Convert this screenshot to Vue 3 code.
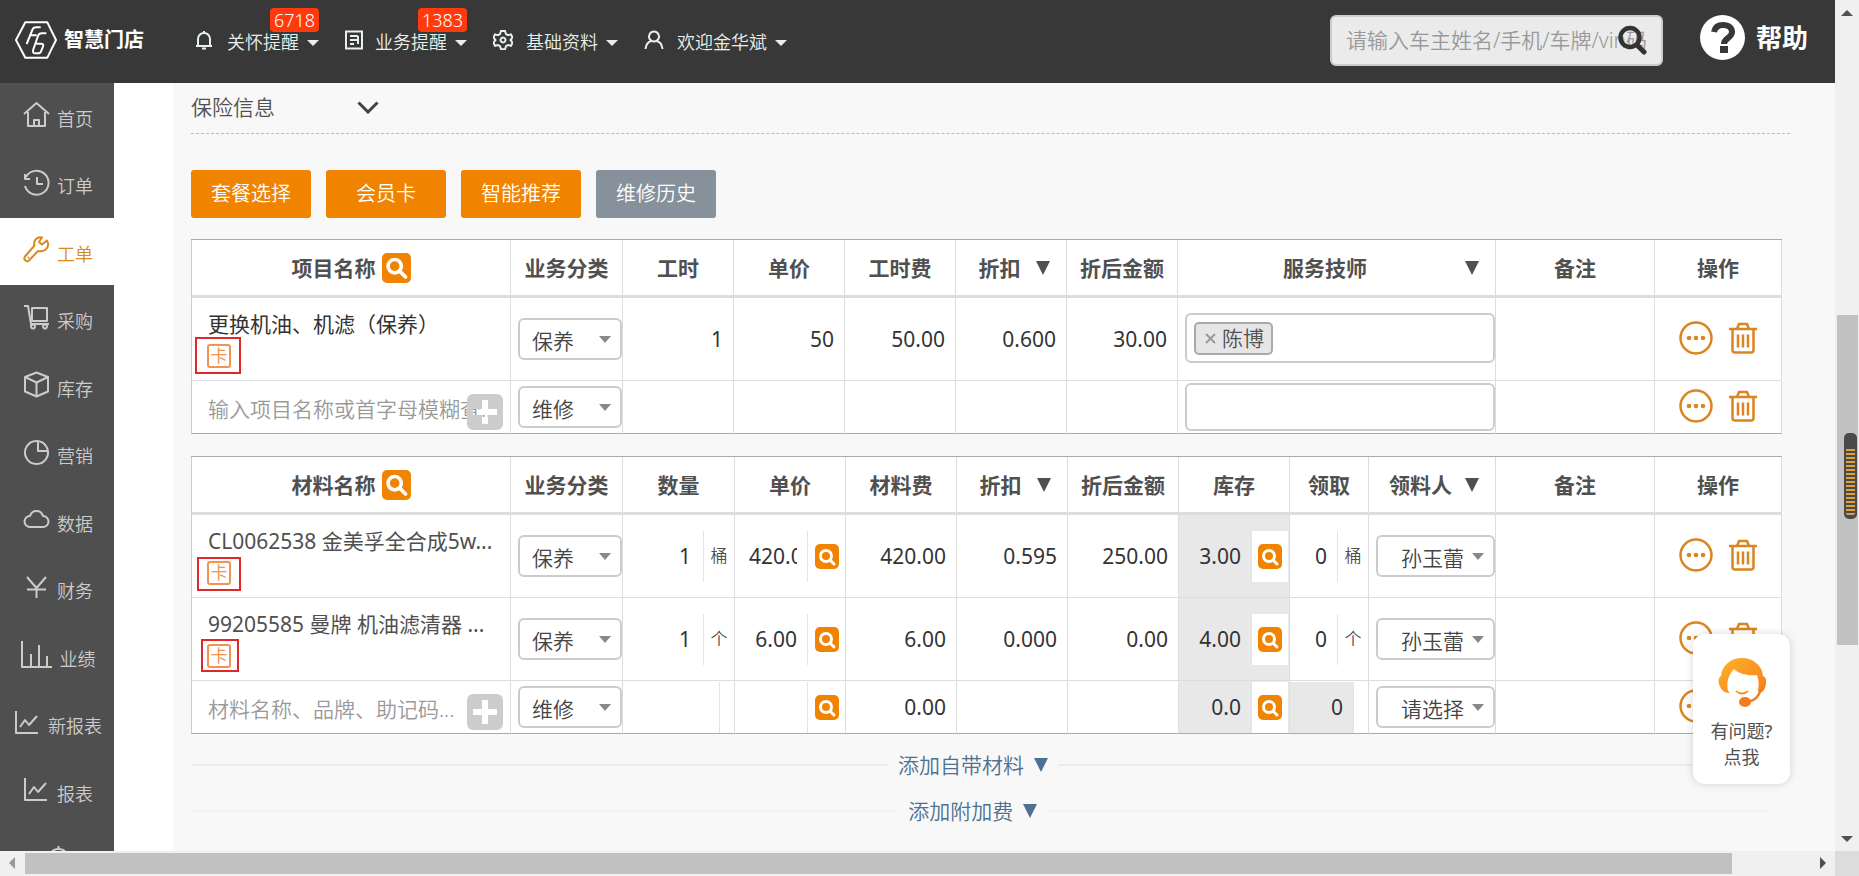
<script setup>
import { ref } from 'vue'

const navItems = [
  { label: '关怀提醒', badge: '6718', icon: ['M4 16V9a6 6 0 0 1 12 0v7', 'M2 16h16', 'M10 1v2', 'M8 18.500h4'] },
  {
    label: '业务提醒',
    badge: '1383',
    narrow: true,
    icon: ['M2 1.500h16v17H2z', 'M6 6h8', 'M6 10h8', 'M6 14h4', 'M14 6v8']
  },
  {
    label: '基础资料',
    icon: [
      'M8 1h4l1 3 2 1.200 3-.8 1.500 3.200-2 2.400 2 2.600-1.500 3.200-3-.8-2 1.200-1 3H8l-1-3-2-1.200-3 .8L.5 12.600 2.500 10 .5 7.600 2 4.400l3 .8L7 4z',
      'M10 7.500a2.500 2.500 0 1 0 .01 0z'
    ]
  },
  { label: '欢迎金华斌', icon: ['M10 1.500a5 5 0 1 0 .01 0z', 'M1.500 19c.5-4.500 3-7.500 6-8', 'M18.500 19c-.5-4.500-3-7.500-6-8'] }
]

const sideItems = [
  { label: '首页', icon: ['M1 13 13.500 2 26 13', 'M5 11v14h17V11', 'M11 25v-6h5v6'] },
  { label: '订单', icon: ['M3 8a12 12 0 1 1-1 9', 'M2 5v5h5', 'M14 8v7h6'] },
  {
    label: '工单',
    active: true,
    icon: ['M24 4.500l-5 4-3-2.500 3-4.500c-5-1-9 3-7.500 8L2 20.500c-2 3 1.500 6 4 4L15 15c6 1.500 11-3 10-8z', 'M5 22l1-1']
  },
  {
    label: '采购',
    icon: ['M1 2h4l3 18', 'M9 4h15v13H9z', 'M7 20h19', 'M10 20.500a2 2 0 1 0 .01 0z', 'M22 20.500a2 2 0 1 0 .01 0z']
  },
  { label: '库存', icon: ['M13.500 1.500 25 6v14.500l-11.500 5L2 20.500V6z', 'M2 6l11.500 5.500L25 6', 'M13.500 11.500v14'] },
  { label: '营销', icon: ['M13.500 2a11.500 11.500 0 1 0 .01 0z', 'M15 2v10h10'] },
  { label: '数据', icon: ['M7 21a5.500 5.500 0 0 1 0-11c1-3.500 3.500-5 6.500-5s5.500 1.500 6.500 5a5.500 5.500 0 0 1 0 11z'] },
  { label: '财务', icon: ['M4 3l9.500 11L23 3', 'M13.500 14v10', 'M4 15.500h19'] },
  { label: '业绩', wide: true, icon: ['M1 0v26h30', 'M10 26V13', 'M18 26V4', 'M26 26V15'] },
  { label: '新报表', icon: ['M2 2v22h22', 'M6 18l5-7 4 5 8-9'] },
  { label: '报表', icon: ['M2 2v22h22', 'M6 18l5-7 4 5 8-9'] },
  { label: '', icon: ['M13.500 2v3', 'M3 18C4 8 8 5 13.500 5S23 8 24 18z'] }
]

const serviceCols = [
  { label: '项目名称', w: 320, search: true },
  { label: '业务分类', w: 112 },
  { label: '工时', w: 111 },
  { label: '单价', w: 111 },
  { label: '工时费', w: 111 },
  { label: '折扣', w: 111, sort: true },
  { label: '折后金额', w: 111 },
  { label: '服务技师', w: 318, sort: true },
  { label: '备注', w: 159 },
  { label: '操作', w: 127 }
]
const services = ref([
  { name: '更换机油、机滤（保养）', mark: 'mark-a', type: '保养', nums: ['1', '50', '50.00', '0.600', '30.00'], staff: '陈博' },
  { hint: '输入项目名称或首字母模糊查...', type: '维修', nums: ['', '', '', '', ''] }
])

const materialCols = [
  { label: '材料名称', w: 320, search: true },
  { label: '业务分类', w: 112 },
  { label: '数量', w: 112 },
  { label: '单价', w: 111 },
  { label: '材料费', w: 111 },
  { label: '折扣', w: 111, sort: true },
  { label: '折后金额', w: 111 },
  { label: '库存', w: 111 },
  { label: '领取', w: 79 },
  { label: '领料人', w: 127, sort: true },
  { label: '备注', w: 159 },
  { label: '操作', w: 127 }
]
const materials = ref([
  {
    name: 'CL0062538 金美孚全合成5w...', mark: 'mark-b', type: '保养', qty: '1', unit: '桶', price: '420.00',
    fee: '420.00', discount: '0.595', total: '250.00', stock: '3.00', taken: '0', picker: '孙玉蕾'
  },
  {
    name: '99205585 曼牌 机油滤清器 ...', mark: 'mark-c', type: '保养', qty: '1', unit: '个', price: '6.00',
    fee: '6.00', discount: '0.000', total: '0.00', stock: '4.00', taken: '0', picker: '孙玉蕾'
  },
  {
    hint: '材料名称、品牌、助记码...', type: '维修', qty: '', unit: '', price: '',
    fee: '0.00', discount: '', total: '', stock: '0.0', taken: '0', picker: '请选择'
  }
])
</script>

<template>
  <div class="window">
    <div class="page">
      <header class="topbar">
        <a class="logo" href="#" aria-label="智慧门店">
          <svg width="44" height="40" viewBox="42 60 132 120" fill="none" stroke="#fff" stroke-width="6" stroke-linejoin="round">
            <path d="M48 120 76 67h66l26 53-26 53H76z" />
            <path d="M122 82h-14q-8 0-11 8L80 132M90 106h20" />
            <path d="M139 100h-14q-8 0-11 8l-14 40q-4 12 6 12h8q8 0 10-8l5-12q3-9-6-9h-14" />
          </svg>
          <span>智慧门店</span>
        </a>
        <nav class="topnav">
          <button v-for="item in navItems" :key="item.label" class="navitem" type="button">
            <svg :class="['nav-icon', { narrow: item.narrow }]" :viewBox="item.narrow ? '1 0 18 20' : '0 0 20 20'">
              <path v-for="d in item.icon" :key="d" :d="d" />
            </svg>
            <span class="nav-label">{{ item.label }}</span>
            <svg class="caret" viewBox="0 0 12 6"><path d="M0 0h12L6 6z" /></svg>
            <span v-if="item.badge" class="badge">{{ item.badge }}</span>
          </button>
        </nav>
        <div class="search">
          <input type="text" aria-label="搜索" placeholder="请输入车主姓名/手机/车牌/vin码" />
          <button type="button" aria-label="搜索">
            <svg width="30" height="30" viewBox="0 0 30 30" fill="none" stroke="#333" stroke-linecap="round">
              <circle cx="13" cy="12.500" r="9.500" stroke-width="4.500" /><path d="M20 20l7 7" stroke-width="5" />
            </svg>
          </button>
        </div>
        <a class="help" href="#">
          <svg width="45" height="45" viewBox="0 0 45 45">
            <circle cx="22.500" cy="22.500" r="22.500" fill="#fff" />
            <path d="M14 17c1-5 4-7 9-7 6 0 9 3 9 7 0 6-8 6-8 12" fill="none" stroke="#383838" stroke-width="6" />
            <path d="M20 31h8v7h-8z" fill="#383838" />
          </svg>
          <span>帮助</span>
        </a>
      </header>

      <div class="body">
        <nav class="sidebar">
          <a v-for="(item, i) in sideItems" :key="i" href="#" class="side-item" :class="{ active: item.active }">
            <svg :class="['side-icon', { wide: item.wide }]" :viewBox="item.wide ? '0 0 32 27' : '0 0 27 27'">
              <path v-for="d in item.icon" :key="d" :d="d" />
            </svg>
            <span v-if="item.label">{{ item.label }}</span>
          </a>
        </nav>

        <main class="content">
          <button class="fold" type="button">
            <span>保险信息</span>
            <svg width="22" height="13" viewBox="0 0 22 13"><path d="M1.500 1.500 11 11l9.500-9.500" fill="none" stroke="#444" stroke-width="3" /></svg>
          </button>

          <div class="actions">
            <button type="button" class="btn">套餐选择</button>
            <button type="button" class="btn">会员卡</button>
            <button type="button" class="btn">智能推荐</button>
            <button type="button" class="btn gray">维修历史</button>
          </div>

          <table class="grid">
            <colgroup><col v-for="c in serviceCols" :key="c.label" :width="c.w" /></colgroup>
            <thead>
              <tr>
                <th v-for="c in serviceCols" :key="c.label" scope="col">
                  <div class="head" :class="{ sortable: c.sort }">
                    <span>{{ c.label }}</span>
                    <button v-if="c.search" class="find big" type="button" aria-label="查找">
                      <svg viewBox="0 0 24 24"><circle cx="10.500" cy="10.500" r="5.500" /><path d="M15 15l4.500 4.500" /></svg>
                    </button>
                    <svg v-if="c.sort" class="tri" viewBox="0 0 14 14"><path d="M0 0h14L7 14z" /></svg>
                  </div>
                </th>
              </tr>
            </thead>
            <tbody>
              <tr v-for="(r, i) in services" :key="i" :class="{ short: r.hint }">
                <td>
                  <div v-if="r.name" class="name">
                    <span class="name-text dark">{{ r.name }}</span>
                    <span class="card">卡<i class="mark" :class="r.mark"></i></span>
                  </div>
                  <div v-else class="entry">
                    <input type="text" aria-label="项目名称" :placeholder="r.hint" />
                    <button class="plus" type="button" aria-label="新增项目">
                      <svg viewBox="0 0 36 36"><path fill-rule="evenodd" d="M6 0h24a6 6 0 0 1 6 6v24a6 6 0 0 1-6 6H6a6 6 0 0 1-6-6V6a6 6 0 0 1 6-6zM15 6v9H6v6h9v9h6v-9h9v-6h-9V6z" /></svg>
                    </button>
                  </div>
                </td>
                <td>
                  <div class="pick">
                    <select v-model="r.type" aria-label="业务分类"><option>保养</option><option>维修</option></select>
                    <svg viewBox="0 0 12 7"><path d="M0 0h12L6 7z" /></svg>
                  </div>
                </td>
                <td v-for="(n, j) in r.nums" :key="j"><input v-model="r.nums[j]" class="num" type="text" :aria-label="serviceCols[j + 2].label" /></td>
                <td>
                  <div class="tags">
                    <span v-if="r.staff" class="tag">
                      <button type="button" aria-label="移除">
                        <svg width="11" height="11" viewBox="0 0 11 11"><path d="M1 1l9 9M10 1l-9 9" stroke="#999" stroke-width="2" /></svg>
                      </button>{{ r.staff }}
                    </span>
                    <input type="text" aria-label="服务技师" />
                  </div>
                </td>
                <td></td>
                <td>
                  <div class="ops">
                    <button type="button" aria-label="更多">
                      <svg width="34" height="34" viewBox="0 0 34 34">
                        <circle cx="17" cy="17" r="15.500" fill="none" stroke="#dc8420" stroke-width="2.500" />
                        <g fill="#dc8420"><circle cx="10" cy="17" r="2.300" /><circle cx="17" cy="17" r="2.300" /><circle cx="24" cy="17" r="2.300" /></g>
                      </svg>
                    </button>
                    <button type="button" aria-label="删除">
                      <svg width="28" height="32" viewBox="0 0 28 32" fill="none" stroke="#dc8420" stroke-width="2.500">
                        <path d="M0 7h28M8 7l2-5h8l2 5M3.500 7v21q0 2.500 2.500 2.500h16q2.500 0 2.500-2.500V7M9 12.500v13M14 12.500v13M19 12.500v13" />
                      </svg>
                    </button>
                  </div>
                </td>
              </tr>
            </tbody>
          </table>

          <table class="grid">
            <colgroup><col v-for="c in materialCols" :key="c.label" :width="c.w" /></colgroup>
            <thead>
              <tr>
                <th v-for="c in materialCols" :key="c.label" scope="col">
                  <div class="head" :class="{ sortable: c.sort }">
                    <span>{{ c.label }}</span>
                    <button v-if="c.search" class="find big" type="button" aria-label="查找">
                      <svg viewBox="0 0 24 24"><circle cx="10.500" cy="10.500" r="5.500" /><path d="M15 15l4.500 4.500" /></svg>
                    </button>
                    <svg v-if="c.sort" class="tri" viewBox="0 0 14 14"><path d="M0 0h14L7 14z" /></svg>
                  </div>
                </th>
              </tr>
            </thead>
            <tbody>
              <tr v-for="(r, i) in materials" :key="i" :class="{ short: r.hint }">
                <td>
                  <div v-if="r.name" class="name">
                    <span class="name-text">{{ r.name }}</span>
                    <span class="card">卡<i class="mark" :class="r.mark"></i></span>
                  </div>
                  <div v-else class="entry">
                    <input type="text" aria-label="材料名称" :placeholder="r.hint" />
                    <button class="plus" type="button" aria-label="新增材料">
                      <svg viewBox="0 0 36 36"><path fill-rule="evenodd" d="M6 0h24a6 6 0 0 1 6 6v24a6 6 0 0 1-6 6H6a6 6 0 0 1-6-6V6a6 6 0 0 1 6-6zM15 6v9H6v6h9v9h6v-9h9v-6h-9V6z" /></svg>
                    </button>
                  </div>
                </td>
                <td>
                  <div class="pick">
                    <select v-model="r.type" aria-label="业务分类"><option>保养</option><option>维修</option></select>
                    <svg viewBox="0 0 12 7"><path d="M0 0h12L6 7z" /></svg>
                  </div>
                </td>
                <td>
                  <div class="split qty">
                    <input v-model="r.qty" class="num" type="text" aria-label="数量" />
                    <span class="unit">{{ r.unit }}</span>
                  </div>
                </td>
                <td>
                  <div class="split price">
                    <input v-model="r.price" class="num" type="text" aria-label="单价" />
                    <span class="side"><button class="find" type="button" aria-label="查价"><svg viewBox="0 0 24 24"><circle cx="11" cy="11.500" r="5.500" /><path d="M15.500 16l3.500 3.500" /></svg></button></span>
                  </div>
                </td>
                <td><input v-model="r.fee" class="num" type="text" aria-label="材料费" /></td>
                <td><input v-model="r.discount" class="num" type="text" aria-label="折扣" /></td>
                <td><input v-model="r.total" class="num" type="text" aria-label="折后金额" /></td>
                <td class="locked">
                  <div class="split stock">
                    <input v-model="r.stock" class="num" type="text" aria-label="库存" readonly />
                    <span class="side"><button class="find" type="button" aria-label="查库存"><svg viewBox="0 0 24 24"><circle cx="11" cy="11.500" r="5.500" /><path d="M15.500 16l3.500 3.500" /></svg></button></span>
                  </div>
                </td>
                <td>
                  <div class="split taken">
                    <input v-model="r.taken" class="num" type="text" aria-label="领取" />
                    <span class="unit">{{ r.unit }}</span>
                  </div>
                </td>
                <td>
                  <div class="pick person">
                    <select v-model="r.picker" aria-label="领料人"><option>孙玉蕾</option><option>请选择</option></select>
                    <svg viewBox="0 0 12 7"><path d="M0 0h12L6 7z" /></svg>
                  </div>
                </td>
                <td></td>
                <td>
                  <div class="ops">
                    <button type="button" aria-label="更多">
                      <svg width="34" height="34" viewBox="0 0 34 34">
                        <circle cx="17" cy="17" r="15.500" fill="none" stroke="#dc8420" stroke-width="2.500" />
                        <g fill="#dc8420"><circle cx="10" cy="17" r="2.300" /><circle cx="17" cy="17" r="2.300" /><circle cx="24" cy="17" r="2.300" /></g>
                      </svg>
                    </button>
                    <button type="button" aria-label="删除">
                      <svg width="28" height="32" viewBox="0 0 28 32" fill="none" stroke="#dc8420" stroke-width="2.500">
                        <path d="M0 7h28M8 7l2-5h8l2 5M3.500 7v21q0 2.500 2.500 2.500h16q2.500 0 2.500-2.500V7M9 12.500v13M14 12.500v13M19 12.500v13" />
                      </svg>
                    </button>
                  </div>
                </td>
              </tr>
            </tbody>
          </table>

          <div class="more">
            <button type="button">添加自带材料<svg class="tri" viewBox="0 0 14 14"><path d="M0 0h14L7 14z" /></svg></button>
          </div>
          <div class="more faint">
            <button type="button">添加附加费<svg class="tri" viewBox="0 0 14 14"><path d="M0 0h14L7 14z" /></svg></button>
          </div>
        </main>
      </div>

      <button class="assist" type="button">
        <svg width="48" height="50" viewBox="0 0 48 50">
          <defs>
            <linearGradient id="hair" x1="0" y1="0" x2="1" y2="1">
              <stop offset="0" stop-color="#ffb428" /><stop offset="1" stop-color="#f57c1c" />
            </linearGradient>
          </defs>
          <path fill="url(#hair)" d="M3 18C4 7 13 0 24 0s20 7 21 18c3 1 4 5 3 8-1 5-3 9-7 9l-1-2c1-6 1-11-1-16-9 1-18-1-23-6-5 5-8 13-6 22l2 2c-6 0-9-3-11-9-1-4 0-7 2-8z" />
          <path fill="none" stroke="url(#hair)" stroke-width="2" d="M18 33q6 5 12 0" />
          <path fill="none" stroke="#f57c1c" stroke-width="2.500" d="M43 31q-3 11-13 13" />
          <ellipse cx="27" cy="44" rx="6" ry="5" fill="#f57c1c" />
        </svg>
        <span>有问题?<br />点我</span>
      </button>
    </div>

    <div class="vbar" aria-hidden="true">
      <svg class="step" viewBox="0 0 24 24"><path d="M6 16h12l-6-6z" /></svg>
      <div class="before"></div>
      <div class="thumb"><div class="meter"></div></div>
      <div class="after"></div>
      <svg class="step" viewBox="0 0 24 24"><path d="M6 9h12l-6 6z" /></svg>
    </div>
    <div class="hbar" aria-hidden="true">
      <svg class="step off" viewBox="0 0 24 24"><path d="M15 6v12l-6-6z" /></svg>
      <div class="thumb"></div>
      <div class="after"></div>
      <svg class="step" viewBox="0 0 24 24"><path d="M9 6v12l6-6z" /></svg>
    </div>
    <div class="corner" aria-hidden="true"></div>
  </div>
</template>

<style>
body {
  overflow: hidden;
}
</style>

<style scoped>
.window,
.window * {
  box-sizing: border-box;
}
.window {
  display: grid;
  grid-template: 1fr 25px / 1fr 24px;
  height: 100vh;
  background: #f0f0f0;
  font: 350 21px/28px 'Noto Sans', 'Noto Sans CJK SC', sans-serif;
  color: #505050;
}
button,
input,
select {
  font: inherit;
  color: inherit;
  border: 0;
  padding: 0;
  margin: 0;
  background: none;
  outline: 0;
  min-width: 0;
}
a {
  color: inherit;
  text-decoration: none;
}
svg {
  display: block;
  flex: none;
}
.page {
  position: relative;
  display: flex;
  flex-direction: column;
  min-width: 0;
  min-height: 0;
  overflow: hidden;
  background: #f8f8f8;
}

/* top bar */
.topbar {
  display: flex;
  flex: none;
  align-items: center;
  height: 83px;
  padding: 0 27px 3px 14px;
  background: #383838;
  color: #eee;
}
.logo {
  display: flex;
  align-items: center;
  gap: 6px;
  font-size: 20px;
  font-weight: 700;
  color: #fff;
}
.topnav {
  display: flex;
  gap: 26px;
  margin-left: 50px;
}
.navitem {
  position: relative;
  display: flex;
  align-items: center;
  height: 80px;
  font-size: 18px;
  white-space: nowrap;
  color: #e8f0ec;
}
.nav-icon {
  width: 20px;
  height: 20px;
  fill: none;
  stroke: currentColor;
  stroke-width: 2;
}
.nav-icon.narrow {
  width: 18px;
}
.nav-label {
  margin: 3px 8px 0 13px;
}
.narrow + .nav-label {
  margin-left: 12px;
}
.caret {
  width: 12px;
  height: 6px;
  margin-top: 6px;
  fill: currentColor;
}
.badge {
  position: absolute;
  top: 8px;
  right: 0;
  padding: 0 4px;
  border-radius: 4px;
  background: #ff3a0c;
  color: #fff;
  font-size: 18px;
  line-height: 24px;
}
.search {
  display: grid;
  align-items: center;
  width: 333px;
  height: 51px;
  margin-left: auto;
  padding: 0 14px 0 14px;
  border: 2px solid #ccc;
  border-radius: 6px;
  background: #ebebeb;
}
.search input,
.search button {
  grid-area: 1 / 1;
}
.search input {
  width: 100%;
}
.search button {
  justify-self: end;
}
.search input::placeholder {
  color: #999;
}
.help {
  display: flex;
  align-items: center;
  gap: 11px;
  margin-left: 37px;
  padding-bottom: 5px;
  font-size: 26px;
  font-weight: 700;
  color: #fff;
}

/* side bar */
.body {
  display: flex;
  flex: 1;
  min-height: 0;
}
.sidebar {
  flex: none;
  width: 114px;
  overflow: hidden;
  background: #4f4f4f;
}
.side-item {
  display: flex;
  align-items: center;
  justify-content: center;
  gap: 7px;
  height: 67px;
  padding: 0 0 4px 2px;
  font-size: 18px;
  color: #ccc;
}
.side-item:nth-child(even) {
  height: 68px;
}
.side-item span {
  padding-top: 8px;
}
.side-item.active {
  background: #fff;
  color: #d98a1c;
}
.side-icon {
  width: 27px;
  height: 27px;
  fill: none;
  stroke: currentColor;
  stroke-width: 2;
  stroke-linejoin: round;
}
.side-icon.wide {
  width: 32px;
}

/* content */
.content {
  flex: 1;
  min-width: 0;
  padding: 0 45px 0 18px;
  border-left: 59px solid #fff;
}
.fold {
  display: flex;
  align-items: center;
  gap: 82px;
  width: 100%;
  height: 51px;
  padding-bottom: 2px;
  border-bottom: 1px dashed #bbb;
}
.actions {
  display: flex;
  gap: 15px;
  margin-top: 36px;
}
.btn {
  width: 120px;
  height: 48px;
  border-radius: 3px;
  background: #f08300;
  color: #fff;
  font-size: 20px;
}
.btn.gray {
  background: #87919b;
}

/* tables */
.grid {
  width: calc(100% - 8px);
  margin-top: 21px;
  table-layout: fixed;
  border-collapse: separate;
  border-spacing: 0;
  border-top: 1px solid #aaa;
  background: #fff;
}
.grid + .grid {
  margin-top: 22px;
}
th,
td {
  padding: 0;
  border-right: 1px solid #ddd;
  border-bottom: 1px solid #ddd;
}
th:first-child,
td:first-child {
  border-left: 1px solid #ccc;
}
th {
  height: 58px;
  border-bottom: 3px solid #ddd;
  font-weight: 700;
  color: #505050;
}
td {
  height: 83px;
}
.short td {
  height: 53px;
  border-bottom-color: #aaa;
}
.head {
  display: flex;
  align-items: center;
  justify-content: center;
  gap: 6px;
  white-space: nowrap;
}
.head.sortable {
  gap: 0;
  padding: 0 16px 0 7px;
}
.sortable span {
  flex: 1;
}
.tri {
  width: 14px;
  height: 14px;
  fill: currentColor;
}
.find {
  width: 24px;
  height: 25px;
  border-radius: 5px;
  background: #f08300;
}
.find svg {
  width: 100%;
  height: 100%;
  fill: none;
  stroke: #fff;
  stroke-width: 3;
  stroke-linecap: round;
}
.find.big {
  width: 29px;
  height: 30px;
}
.name {
  display: flex;
  flex-direction: column;
  align-items: flex-start;
  gap: 6px;
  padding: 0 0 0 16px;
}
.name-text {
  font-weight: 400;
  white-space: nowrap;
}
.dark {
  color: #333;
}
.card {
  position: relative;
  width: 24px;
  height: 24px;
  margin-left: -1px;
  border: 2px solid #f09450;
  border-radius: 3px;
  color: #f09450;
  font-size: 17px;
  font-weight: 400;
  line-height: 20px;
  text-align: center;
}
.mark {
  position: absolute;
  border: 2px solid #e02828;
}
.mark-a {
  inset: -9px -12px -8px -14px;
}
.mark-b {
  inset: -6px -12px -8px -12px;
}
.mark-c {
  inset: -7px -10px -6px -8px;
}
.entry {
  display: grid;
  align-items: center;
  padding: 4px 7px 0 16px;
}
.entry input,
.entry button {
  grid-area: 1 / 1;
}
.entry input {
  width: 100%;
}
.entry input::placeholder {
  color: #999;
}
.plus {
  justify-self: end;
  margin-top: 6px;
}
.plus svg {
  width: 36px;
  height: 36px;
  fill: #ccc;
}
.pick {
  display: grid;
  align-items: center;
  height: 42px;
  margin-left: 7px;
  border: 2px solid #ccc;
  border-radius: 6px;
}
.pick select,
.pick svg {
  grid-area: 1 / 1;
}
.pick select {
  appearance: none;
  width: 100%;
  height: 38px;
  padding: 3px 0 0 12px;
  color: #444;
}
.pick svg {
  justify-self: end;
  width: 12px;
  height: 7px;
  margin-right: 9px;
  fill: #888;
  pointer-events: none;
}
.pick.person select {
  padding-left: 23px;
}
.num {
  display: block;
  width: 100%;
  height: 51px;
  padding: 0 10px;
  text-align: right;
  font-weight: 400;
  color: #333;
}
.split {
  display: flex;
  height: 51px;
}
.split .num {
  flex: 1;
  border-right: 1px solid #e4e4e4;
}
.unit {
  width: 30px;
  font-size: 17px;
  line-height: 50px;
  text-align: center;
}
.short .unit {
  width: 14px;
}
.qty .num {
  padding-right: 12px;
}
.price .num {
  padding: 0 10px 0 14px;
}
.side {
  display: flex;
  align-items: center;
  justify-content: center;
  width: 37px;
}
.locked {
  background: #e8e8e8;
}
.stock .side {
  width: 36px;
  margin-right: 1px;
  background: #fff;
}
.short .taken .num {
  background: #e8e8e8;
}
.tags {
  display: flex;
  align-items: center;
  height: 50px;
  margin: 0 0 2px 7px;
  padding: 0 7px;
  border: 2px solid #ccc;
  border-radius: 6px;
}
.tags input {
  flex: 1;
}
.short .tags {
  height: 48px;
  margin-bottom: 0;
}
.tag {
  display: flex;
  align-items: center;
  gap: 6px;
  height: 33px;
  padding: 0 7px 0 9px;
  border: 2px solid #aaa;
  border-radius: 5px;
  background: #e6e6e6;
}
.ops {
  display: flex;
  align-items: center;
  justify-content: center;
  gap: 16px;
  padding-bottom: 3px;
}
.more {
  display: flex;
  align-items: center;
  gap: 10px;
  height: 46px;
  margin-right: 21px;
}
.more::before,
.more::after {
  content: '';
  flex: 49;
  height: 2px;
  background: #ececec;
}
.more::after {
  flex: 50;
}
.more.faint::before,
.more.faint::after {
  background: #f2f2f2;
}
.grid + .more {
  margin-top: 8px;
}
.more button {
  display: flex;
  align-items: center;
  gap: 10px;
  color: #4f7090;
}

/* floating help card */
.assist {
  position: absolute;
  right: 45px;
  bottom: 67px;
  display: flex;
  flex-direction: column;
  align-items: center;
  gap: 10px;
  width: 97px;
  height: 150px;
  padding-top: 24px;
  border-radius: 12px;
  background: #fff;
  box-shadow: 0 0 8px rgba(0, 0, 0, 0.16);
  font-size: 18px;
  font-weight: 400;
  line-height: 26px;
}

/* scroll bars */
.vbar {
  display: flex;
  flex-direction: column;
}
.hbar {
  display: flex;
}
.step {
  width: 24px;
  height: 24px;
  fill: #505050;
}
.step.off {
  fill: #999;
}
.thumb {
  position: relative;
  background: #c1c1c1;
}
.before {
  flex: 291;
}
.vbar .thumb {
  flex: 330;
  margin: 0 1px 0 2px;
}
.vbar .after {
  flex: 182;
}
.hbar .thumb {
  flex: 1706;
  margin: 2px 0 2px 1px;
}
.hbar .after {
  flex: 79;
}
.corner {
  background: #dcdcdc;
}
.meter {
  position: absolute;
  top: 118px;
  right: 1px;
  width: 13px;
  height: 86px;
  border: 2px solid #4a4a4a;
  border-top-width: 14px;
  border-bottom-width: 4px;
  border-radius: 5px;
  background: repeating-linear-gradient(#4a4a4a 0 2px, #e0a040 2px 4px);
}
</style>
